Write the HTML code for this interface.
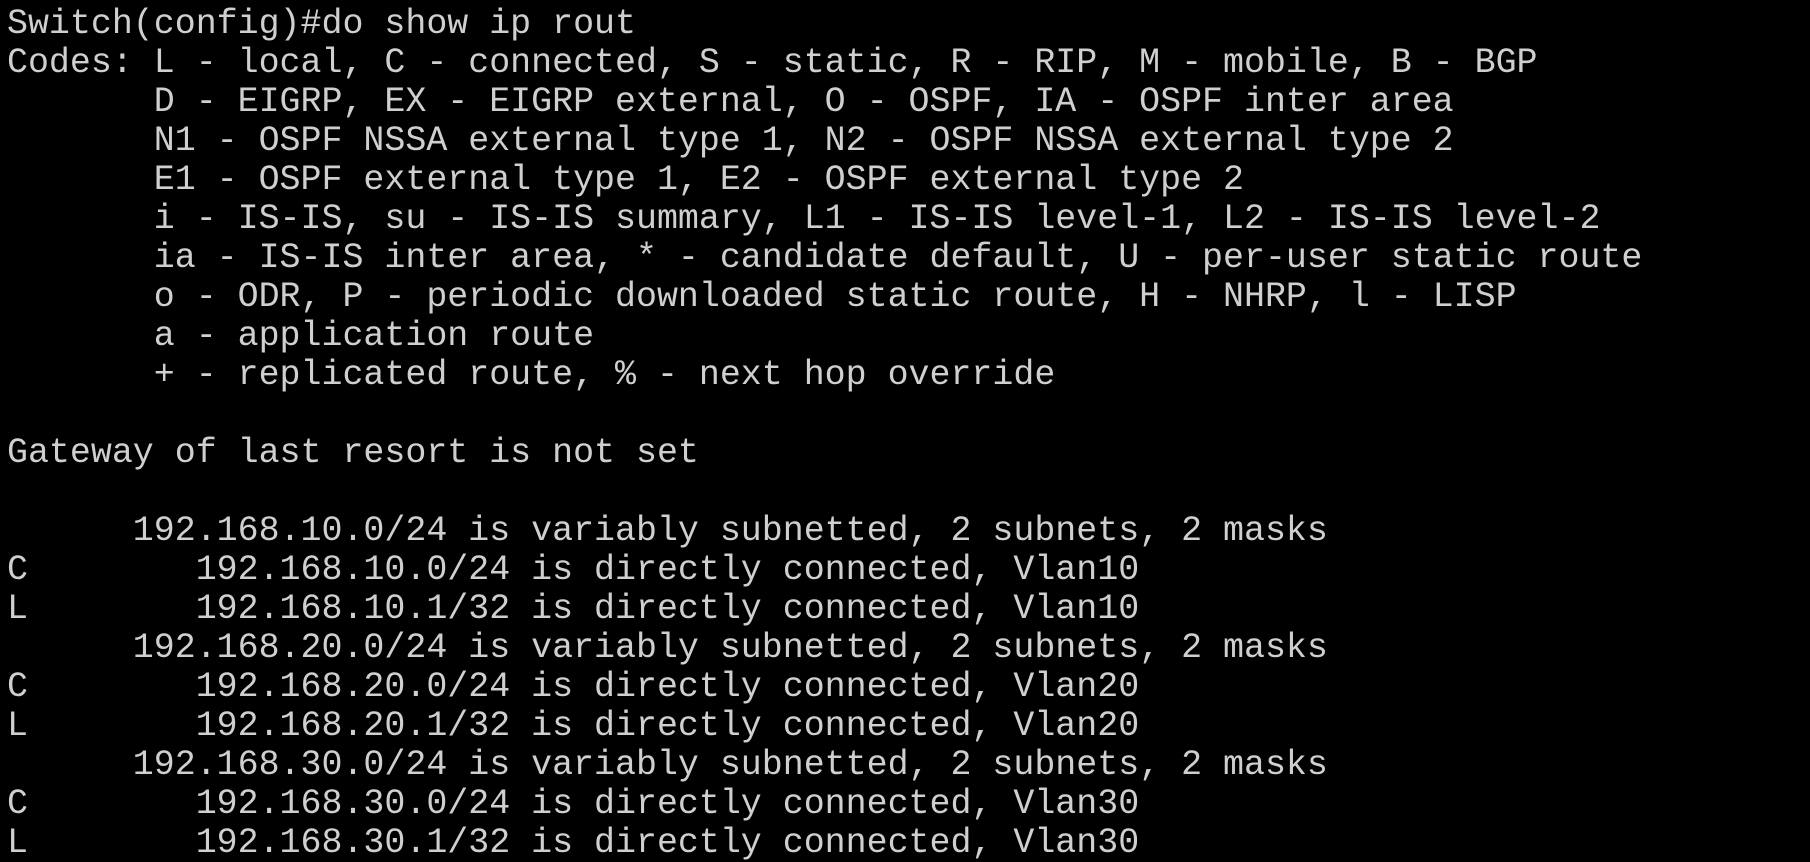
<!DOCTYPE html>
<html><head><style>
html,body{margin:0;padding:0;background:#000;width:1810px;height:862px;overflow:hidden}
pre{margin:0;padding:5px 0 0 7px;font-family:"Liberation Mono",monospace;font-size:34.95px;line-height:39px;color:#cfcfcf;white-space:pre}
</style></head><body><pre>Switch(config)#do show ip rout
Codes: L - local, C - connected, S - static, R - RIP, M - mobile, B - BGP
       D - EIGRP, EX - EIGRP external, O - OSPF, IA - OSPF inter area
       N1 - OSPF NSSA external type 1, N2 - OSPF NSSA external type 2
       E1 - OSPF external type 1, E2 - OSPF external type 2
       i - IS-IS, su - IS-IS summary, L1 - IS-IS level-1, L2 - IS-IS level-2
       ia - IS-IS inter area, * - candidate default, U - per-user static route
       o - ODR, P - periodic downloaded static route, H - NHRP, l - LISP
       a - application route
       + - replicated route, % - next hop override

Gateway of last resort is not set

      192.168.10.0/24 is variably subnetted, 2 subnets, 2 masks
C        192.168.10.0/24 is directly connected, Vlan10
L        192.168.10.1/32 is directly connected, Vlan10
      192.168.20.0/24 is variably subnetted, 2 subnets, 2 masks
C        192.168.20.0/24 is directly connected, Vlan20
L        192.168.20.1/32 is directly connected, Vlan20
      192.168.30.0/24 is variably subnetted, 2 subnets, 2 masks
C        192.168.30.0/24 is directly connected, Vlan30
L        192.168.30.1/32 is directly connected, Vlan30</pre></body></html>
